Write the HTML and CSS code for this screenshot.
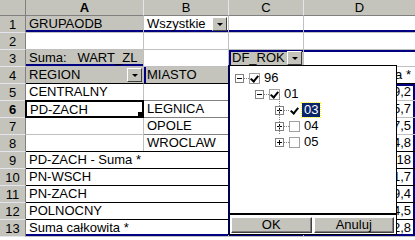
FILE: index.html
```html
<!DOCTYPE html>
<html lang="pl">
<head>
  <meta charset="UTF-8">
  <title>Tabela przestawna</title>
  <link rel="stylesheet" href="styles.css">
</head>
<body>
  <div class="sheet">
    <!-- header row -->
    <div class="hd corner"></div>
    <div class="hd col active">A</div>
    <div class="hd col">B</div>
    <div class="hd col">C</div>
    <div class="hd col">D</div>

    <!-- row 1: page field -->
    <div class="hd row">1</div>
    <div class="c field blue-b">GRUPAODB</div>
    <div class="c blue-b has-dd">Wszystkie<span class="dd"></span></div>
    <div class="c blue-b"></div>
    <div class="c blue-b"></div>

    <div class="hd row">2</div>
    <div class="c"></div>
    <div class="c"></div>
    <div class="c"></div>
    <div class="c"></div>

    <!-- row 3: data field + column field -->
    <div class="hd row">3</div>
    <div class="c field blue-b">Suma:&nbsp;&nbsp;&nbsp;WART_ZL</div>
    <div class="c"></div>
    <div class="c field blue-tl has-dd">DF_ROK<span class="dd"></span></div>
    <div class="c blue-t"></div>

    <!-- row 4: row fields -->
    <div class="hd row">4</div>
    <div class="c field has-dd">REGION<span class="dd"></span></div>
    <div class="c field blue-l">MIASTO</div>
    <div class="c"></div>
    <div class="c num">Suma *</div>

    <div class="hd row">5</div>
    <div class="c blk-t">CENTRALNY</div>
    <div class="c blk-t"></div>
    <div class="c blk-t"></div>
    <div class="c num blk-t blue-tr">39,2</div>

    <div class="hd row active">6</div>
    <div class="c sel">PD-ZACH<span class="handle"></span></div>
    <div class="c gr-tb">LEGNICA</div>
    <div class="c"></div>
    <div class="c num blue-r">15,7</div>

    <div class="hd row">7</div>
    <div class="c"></div>
    <div class="c gr-b">OPOLE</div>
    <div class="c"></div>
    <div class="c num blue-r">27,5</div>

    <div class="hd row">8</div>
    <div class="c"></div>
    <div class="c">WROCLAW</div>
    <div class="c"></div>
    <div class="c num blue-r">34,8</div>

    <div class="hd row">9</div>
    <div class="c blk-t span2">PD-ZACH - Suma *</div>
    <div class="c blk-t"></div>
    <div class="c num blk-t blue-r">818</div>

    <div class="hd row">10</div>
    <div class="c blk-t span2">PN-WSCH</div>
    <div class="c blk-t"></div>
    <div class="c num blk-t blue-r">21,7</div>

    <div class="hd row">11</div>
    <div class="c blk-t span2">PN-ZACH</div>
    <div class="c blk-t"></div>
    <div class="c num blk-t blue-r">89,4</div>

    <div class="hd row">12</div>
    <div class="c blk-t span2">POLNOCNY</div>
    <div class="c blk-t"></div>
    <div class="c num blk-t blue-r">14,5</div>

    <div class="hd row">13</div>
    <div class="c blk-t blue-b span2">Suma całkowita *</div>
    <div class="c blk-t blue-b"></div>
    <div class="c num blk-t blue-rb">82,8</div>
  </div>

  <!-- DF_ROK drop-down -->
  <div class="popup">
    <div class="tree">
      <div class="node l0">
        <span class="exp minus"></span><span class="dots"></span><span class="chk on"></span><span class="lbl">96</span>
      </div>
      <div class="node l1">
        <span class="vline"></span>
        <span class="exp minus"></span><span class="dots"></span><span class="chk on"></span><span class="lbl">01</span>
      </div>
      <div class="node l2">
        <span class="vline"></span>
        <span class="exp plus"></span><span class="dots"></span><span class="chk on bare"></span><span class="lbl focus">03</span>
      </div>
      <div class="node l2">
        <span class="vline"></span>
        <span class="exp plus"></span><span class="dots"></span><span class="chk"></span><span class="lbl">04</span>
      </div>
      <div class="node l2">
        <span class="vline last"></span>
        <span class="exp plus"></span><span class="dots"></span><span class="chk"></span><span class="lbl">05</span>
      </div>
    </div>
    <div class="buttons">
      <button class="btn">OK</button>
      <button class="btn">Anuluj</button>
    </div>
  </div>
</body>
</html>
```

FILE: styles.css
```css
body { margin: 0; background: #fff; font-family: "Liberation Sans", Arial, sans-serif; font-size: 13px; color: #000; overflow: hidden; }
.sheet { display: grid; grid-template-columns: 26px 118px 85px 75px 112px; grid-template-rows: 16px repeat(13, 17px); }

.hd { background: #c4c4bc; color: #000; text-align: center; border-right: 1px solid #808080; border-bottom: 1px solid #e4e4ec; box-sizing: border-box; }
.hd.col { line-height: 16px; border-right: 1px solid #e4e4ec; border-bottom: 1px solid #808080; }
.hd.corner { border-bottom: 1px solid #808080; }
.hd.row { line-height: 17px; }
.hd.active { font-weight: bold; }

.c { position: relative; border-right: 1px solid #c0c0c0; border-bottom: 1px solid #c0c0c0; box-sizing: border-box; padding: 0 2px 0 3px; line-height: 16px; white-space: nowrap; overflow: hidden; }
.c.num { text-align: right; padding-right: 4px; }
.c.span2 { grid-column: span 2; overflow: visible; }
.field { background: #c4c4bc; }

.has-dd { padding-right: 18px; }
.dd { position: absolute; right: 1px; top: 1px; width: 15px; height: 14px; box-sizing: border-box; background: #c4c4bc; border: 1px solid; border-color: #fff #404040 #404040 #fff; }
.dd::after { content: ""; position: absolute; left: 4px; top: 5px; border-left: 3px solid transparent; border-right: 3px solid transparent; border-top: 3px solid #000; }

/* pivot outlines */
.blue-b { box-shadow: inset 0 -2px #000080; }
.blue-t { box-shadow: inset 0 2px #000080; }
.blue-tl { box-shadow: inset 2px 2px #000080; }
.blue-l { box-shadow: inset 2px 0 #000080; }
.blue-r { box-shadow: inset -2px 0 #000080; }
.blue-tr { box-shadow: inset -2px 2px #000080; }
.blue-rb { box-shadow: inset -2px -2px #000080; }
.blk-t { border-top: 1px solid #000; margin-top: -1px; }
.gr-tb { border-top: 1px solid #808080; margin-top: -1px; border-bottom-color: #808080; }
.gr-b { border-bottom-color: #808080; }

/* active cell */
.sel { border: 2px solid #000; margin: -1px 0 0 -1px; width: calc(100% + 1px); }
.handle { position: absolute; right: -1px; bottom: -1px; width: 5px; height: 5px; background: #000; }

/* drop-down panel */
.popup { position: absolute; z-index: 2; left: 228px; top: 65px; width: 169px; height: 170px; box-sizing: border-box; background: #fff; border: 1px solid #000; border-left: 2px solid #000050; display: flex; flex-direction: column; }
.tree { flex: 1; padding: 4px 0 0 5px; border-bottom: 2px solid #000; }
.node { position: relative; display: flex; align-items: center; height: 16px; }
.node.l1 { padding-left: 20px; }
.node.l2 { padding-left: 40px; }
.exp { width: 9px; height: 9px; box-sizing: border-box; border: 1px solid #808080; position: relative; background: #fff; }
.exp::before { content: ""; position: absolute; left: 1px; top: 3px; width: 5px; height: 1px; background: #000; }
.exp.plus::after { content: ""; position: absolute; left: 3px; top: 1px; width: 1px; height: 5px; background: #000; }
.dots { width: 5px; border-top: 1px dotted #808080; }
.chk { width: 11px; height: 11px; box-sizing: border-box; border: 1px solid #a0a0a0; position: relative; }
.chk.on::after { content: ""; position: absolute; left: 2px; top: 0; width: 3px; height: 6px; border: solid #000; border-width: 0 2px 2px 0; transform: rotate(40deg); }
.chk.bare { border-color: transparent; }
.lbl { padding: 0 2px; margin-left: 2px; line-height: 14px; }
.lbl.focus { background: #0a246a; color: #fff; outline: 1px dotted #ff0; }
.vline { position: absolute; top: -8px; height: 16px; border-left: 1px dotted #808080; }
.l1 .vline { left: 24px; top: -10px; height: 7px; }
.l2 .vline { left: 44px; }
.l2 .vline.last { height: 8px; }

.buttons { display: flex; gap: 2px; padding: 2px 2px 1px 1px; background: #fff; }
.btn { flex: 1; height: 16px; padding: 0; font: inherit; line-height: 12px; background: #c4c4bc; border: 1px solid; border-color: #fff #404040 #404040 #fff; box-shadow: inset -1px -1px #808080; }
```
